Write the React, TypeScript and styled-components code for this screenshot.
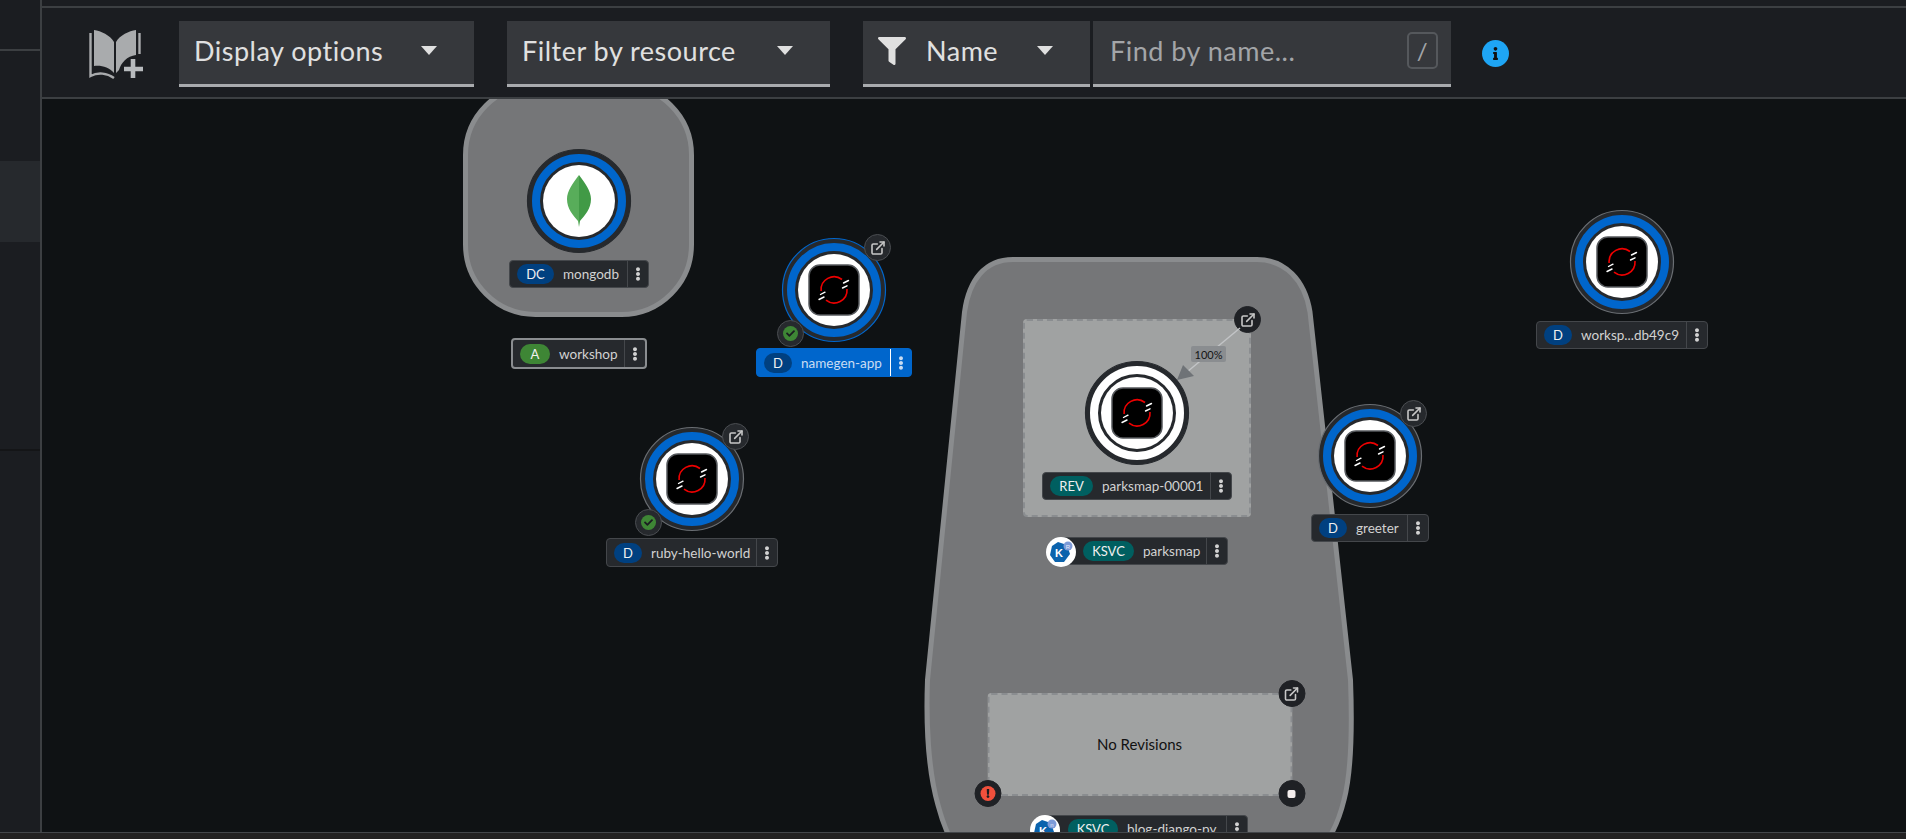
import React from "react";
import styled, { createGlobalStyle } from "styled-components";
import { ExternalLink } from "lucide-react";
import { FaCheck, FaEllipsisV, FaFilter, FaInfo, FaExclamation } from "react-icons/fa";

// canvas origin in page coordinates, everything on the canvas is given in page px
const CX = 42;
const CY = 99;

const GlobalStyle = createGlobalStyle`
    html, body {
        margin: 0;
        padding: 0;
        background-color: #1b1d21;
        overflow: hidden;
    }
    body {
        font-family: "Lato", "Open Sans", sans-serif;
    }
`;

const Page = styled.div`
    display: flex;
    flex-direction: column;
    width: 1906px;
    height: 839px;
    overflow: hidden;
`;

const Shell = styled.div`
    display: flex;
    height: 832px;
`;

const Sidebar = styled.aside`
    display: flex;
    flex-direction: column;
    width: 40px;
    background-color: #1b1d21;
    border-right: 2px solid #3c3f42;
`;

const SideItem = styled.div<{ $h: number; $active?: boolean; $line?: string }>`
    height: ${(p) => p.$h}px;
    background-color: ${(p) => (p.$active ? "#26292d" : "transparent")};
    border-bottom: ${(p) => (p.$line ? `2px solid ${p.$line}` : "none")};
    box-sizing: border-box;
`;

const Main = styled.main`
    display: flex;
    flex-direction: column;
    flex: 1;
    min-width: 0;
`;

const TopStrip = styled.div`
    height: 8px;
    box-sizing: border-box;
    background-color: #1b1d21;
    border-bottom: 2px solid #3c3f42;
`;

const Toolbar = styled.div`
    display: flex;
    align-items: center;
    height: 91px;
    box-sizing: border-box;
    padding: 2px 0 0 47px;
    background-color: #1b1d21;
    border-bottom: 2px solid #3c3f42;
`;

const BookIcon = styled.svg`
    width: 56px;
    height: 50px;
    margin-right: 34px;
    flex: none;
`;

const Dropdown = styled.div<{ $w: number; $mr?: number; $pad?: number }>`
    display: flex;
    align-items: center;
    width: ${(p) => p.$w}px;
    height: 66px;
    margin-right: ${(p) => p.$mr ?? 0}px;
    padding: 0 37px 3px ${(p) => p.$pad ?? 15}px;
    box-sizing: border-box;
    flex: none;
    background-color: #36383c;
    border-bottom: 3px solid #a9abae;
    color: #e0e0e0;
    font-size: 27px;
    letter-spacing: 0.5px;
`;

const Caret = styled.span`
    margin-left: auto;
    width: 0;
    height: 0;
    border-left: 8px solid transparent;
    border-right: 8px solid transparent;
    border-top: 9px solid #e0e0e0;
`;

const FilterIcon = styled(FaFilter)`
    width: 28px;
    height: 28px;
    margin-right: 20px;
    color: #e0e0e0;
`;

const SearchBox = styled(Dropdown)`
    color: #a3a5a8;
    margin-left: 3px;
    padding-right: 13px;
`;

const SlashKey = styled.span`
    margin-left: auto;
    width: 31px;
    height: 37px;
    box-sizing: border-box;
    display: flex;
    align-items: center;
    justify-content: center;
    border: 2px solid #55585c;
    border-radius: 5px;
    color: #a3a5a8;
    font-size: 24px;
`;

const InfoBadge = styled.span`
    display: flex;
    align-items: center;
    justify-content: center;
    width: 27px;
    height: 27px;
    margin-left: 31px;
    border-radius: 50%;
    background-color: #1ea5f5;
    color: #111;
`;

const Canvas = styled.div`
    position: relative;
    flex: 1;
    overflow: hidden;
    background-color: #0f1214;
`;

const Layer = styled.svg`
    position: absolute;
    left: 0;
    top: 0;
`;

// one thing on the topology canvas, x is its horizontal centre, y its top
const CanvasItem = styled.div<{ $x: number; $y: number; $gap?: number }>`
    position: absolute;
    left: ${(p) => p.$x - CX}px;
    top: ${(p) => p.$y - CY}px;
    transform: translateX(-50%);
    display: flex;
    flex-direction: column;
    align-items: center;
    gap: ${(p) => p.$gap ?? 6}px;
`;

const RevisionBox = styled.div<{ $w: number; $h: number }>`
    position: relative;
    width: ${(p) => p.$w}px;
    height: ${(p) => p.$h}px;
    box-sizing: border-box;
    padding-bottom: 2px;
    display: flex;
    align-items: center;
    justify-content: center;
    background-color: #a0a2a2;
    border: 2px dashed #8a8d90;
    border-radius: 4px;
    color: #111;
    font-size: 15px;
`;

const PodWrap = styled.div`
    position: relative;
    width: 106px;
    height: 106px;
`;

const NodeSvg = styled.svg`
    display: block;
    width: 106px;
    height: 106px;
`;

const Decorator = styled.span<{ $solid?: boolean }>`
    position: absolute;
    width: 27px;
    height: 27px;
    box-sizing: border-box;
    display: flex;
    align-items: center;
    justify-content: center;
    border-radius: 50%;
    background-color: ${(p) => (p.$solid ? "#1f2125" : "#26292d")};
    border: 1px solid ${(p) => (p.$solid ? "#1f2125" : "#4a4d51")};
    color: #c7c7c7;
`;

const LinkSpot = styled(Decorator)`
    left: 83px;
    top: -3px;
`;

const StatusSpot = styled(Decorator)`
    left: -4px;
    top: 83px;
`;

const CornerSpot = styled(Decorator)<{ $corner: "tr" | "bl" | "br"; $shift?: number }>`
    ${(p) => (p.$corner === "bl" ? "left: -15px;" : `right: ${-15 + (p.$shift ?? 0)}px;`)}
    ${(p) => (p.$corner === "tr" ? "top: -15px;" : "bottom: -13px;")}
`;

const StatusDot = styled.span<{ $color: string }>`
    display: flex;
    align-items: center;
    justify-content: center;
    width: 15px;
    height: 15px;
    border-radius: 50%;
    background-color: ${(p) => p.$color};
    color: #1b1d21;
`;

const StopDot = styled.span`
    width: 8px;
    height: 8px;
    border-radius: 2px;
    background-color: #f4eeee;
`;

const EdgeTag = styled.span`
    position: absolute;
    left: ${1191 - CX}px;
    top: ${346 - CY}px;
    width: 35px;
    height: 16px;
    display: flex;
    align-items: center;
    justify-content: center;
    border-radius: 2px;
    background-color: #8a8d90;
    color: #151515;
    font-size: 11px;
`;

const Label = styled.div<{ $w: number; $h?: number; $selected?: boolean; $strong?: boolean; $pad?: number }>`
    position: relative;
    width: ${(p) => p.$w}px;
    height: ${(p) => p.$h ?? 28}px;
    box-sizing: border-box;
    display: flex;
    align-items: center;
    padding-left: ${(p) => p.$pad ?? 7}px;
    border-radius: 4px;
    background-color: ${(p) => (p.$selected ? "#0066cc" : "#26292d")};
    border: ${(p) => (p.$strong ? "2px solid #8a8d90" : `1px solid ${p.$selected ? "#0066cc" : "#44474b"}`)};
    color: ${(p) => (p.$selected ? "#c9dcf2" : "#d2d2d2")};
    font-size: 13.5px;
    white-space: nowrap;
`;

const Badge = styled.span<{ $w: number; $color: string }>`
    display: flex;
    align-items: center;
    justify-content: center;
    width: ${(p) => p.$w}px;
    height: 20px;
    flex: none;
    border-radius: 10px;
    background-color: ${(p) => p.$color};
    color: #f0f0f0;
    font-size: 13px;
`;

const LabelName = styled.span`
    flex: 1;
    margin-left: 9px;
`;

const Kebab = styled.span<{ $selected?: boolean }>`
    display: flex;
    align-items: center;
    justify-content: center;
    width: 20px;
    height: 100%;
    flex: none;
    border-left: 1px solid ${(p) => (p.$selected ? "#ffffff" : "#44474b")};
    color: ${(p) => (p.$selected ? "#c9dcf2" : "#d2d2d2")};
`;

const KnativeSvg = styled.svg`
    position: absolute;
    left: -15px;
    top: -1px;
    width: 30px;
    height: 30px;
`;

const Footer = styled.footer`
    flex: 1;
    background-color: #232222;
    border-top: 1px solid #44474b;
`;

const OpenShiftLogo = () => (
    <g>
        <rect x="-25" y="-25" width="50" height="50" rx="11" fill="#000" stroke="#55585c" strokeWidth="1.5" />
        <path d="M8 -10.5 A13 13 0 0 0 -12.9 1" fill="none" stroke="#e00" strokeWidth="1.6" />
        <path d="M-8 10.2 A13 13 0 0 0 13 -1" fill="none" stroke="#e00" strokeWidth="1.6" />
        <g stroke="#fff" strokeWidth="1.4" strokeLinecap="round">
            <path d="M9.5 -7 L14.5 -9.5" />
            <path d="M8.5 -2 L13 -4.2" />
            <path d="M-13.5 4.5 L-9 2.2" />
            <path d="M-15 9.5 L-10 7" />
        </g>
    </g>
);

const MongoLeaf = () => (
    <g>
        <path d="M0 -26 C-6 -18 -12 -10 -12 -2 C-12 8 -6 14 -1 20 L0 26 Z" fill="#58ad5a" />
        <path d="M0 -26 C6 -18 12 -10 12 -2 C12 8 6 14 1 20 L0 26 Z" fill="#419a46" />
    </g>
);

type PodProps = {
    ring?: string;
    rim?: string;
    leaf?: boolean;
    link?: boolean;
    ok?: boolean;
};

// pod donut, drawn as concentric circles
const Pod = ({ ring = "#0066cc", rim = "#6a6e73", leaf, link, ok }: PodProps) => (
    <PodWrap>
        <NodeSvg viewBox="-53 -53 106 106">
            <circle r="51.5" fill="#26292d" stroke={rim} strokeWidth="1.2" />
            <circle r="43" fill="none" stroke={ring} strokeWidth="8" />
            <circle r="36" fill="#fff" />
            {leaf ? <MongoLeaf /> : <OpenShiftLogo />}
        </NodeSvg>
        {link && (
            <LinkSpot>
                <ExternalLink size={16} strokeWidth={2.4} />
            </LinkSpot>
        )}
        {ok && (
            <StatusSpot>
                <StatusDot $color="#3e8635">
                    <FaCheck size={9} />
                </StatusDot>
            </StatusSpot>
        )}
    </PodWrap>
);

const KnativeIcon = ({ letter }: { letter: string }) => (
    <KnativeSvg viewBox="-15 -15 30 30">
        <circle r="15" fill="#fff" />
        <path d="M-3 -10 L6 -7 L9 2 L3 10 L-6 10 L-11 3 L-9 -6 Z" fill="#0b63ad" />
        <text x="-2" y="5" textAnchor="middle" fontSize="11" fontWeight="700" fill="#fff" fontFamily="Liberation Sans, sans-serif">K</text>
        <circle cx="7" cy="-6" r="4.5" fill="#7d9bd8" />
        <text x="7" y="-3.5" textAnchor="middle" fontSize="6" fill="#e6ecf8" fontFamily="Liberation Sans, sans-serif">{letter}</text>
    </KnativeSvg>
);

type TagProps = {
    w: number;
    kind: string;
    kindW: number;
    color: string;
    name: string;
    selected?: boolean;
    strong?: boolean;
    pad?: number;
    h?: number;
    service?: string;
};

const NodeLabel = ({ w, kind, kindW, color, name, selected, strong, pad, h, service }: TagProps) => (
    <Label $w={w} $h={h} $selected={selected} $strong={strong} $pad={pad}>
        {service && <KnativeIcon letter={service} />}
        <Badge $w={kindW} $color={color}>{kind}</Badge>
        <LabelName>{name}</LabelName>
        <Kebab $selected={selected}>
            <FaEllipsisV size={14} />
        </Kebab>
    </Label>
);

const BLUE = "#004080";
const TEAL = "#005f60";

export default function App() {
    return (
        <Page>
            <GlobalStyle />
            <Shell>
                <Sidebar>
                    <SideItem $h={51} $line="#3c3f42" />
                    <SideItem $h={110} />
                    <SideItem $h={81} $active />
                    <SideItem $h={209} $line="#141517" />
                </Sidebar>
                <Main>
                    <TopStrip />
                    <Toolbar>
                        <BookIcon viewBox="0 0 56 50">
                            <g fill="#a9abad">
                                <path d="M5 1 C12 2 21 6 25 13 V44 C20 38 12 36 5 37 Z" />
                                <path d="M27 13 C31 6 40 2 47 1 V26 C38 27 32 34 30 41 L27 44 Z" />
                            </g>
                            <path d="M1.5 4 V47 C9 43 18 44 25 49" fill="none" stroke="#a9abad" strokeWidth="2.4" />
                            <path d="M50.5 4 V25" fill="none" stroke="#a9abad" strokeWidth="2.4" />
                            <path d="M44 30 V49 M35 40 H54" fill="none" stroke="#b8bbbe" strokeWidth="4.6" />
                        </BookIcon>
                        <Dropdown $w={295} $mr={33}>
                            Display options
                            <Caret />
                        </Dropdown>
                        <Dropdown $w={323} $mr={33}>
                            Filter by resource
                            <Caret />
                        </Dropdown>
                        <Dropdown $w={227}>
                            <FilterIcon />
                            Name
                            <Caret />
                        </Dropdown>
                        <SearchBox $w={358} $pad={17}>
                            Find by name...
                            <SlashKey>/</SlashKey>
                        </SearchBox>
                        <InfoBadge>
                            <FaInfo size={13} />
                        </InfoBadge>
                    </Toolbar>
                    <Canvas>
                        {/* group hulls */}
                        <Layer width={1864} height={733} viewBox={`${CX} ${CY} 1864 733`}>
                            <rect x="465.5" y="85" width="226" height="229.5" rx="70" fill="#757678" stroke="#8a8c8e" strokeWidth="5" />
                            <path
                                d="M1013 259.5 H1257 C1285 259.5 1305 280 1310 312 L1350.5 680 C1352 720 1352 770 1344 800 C1332 850 1300 880 1257 880 H1013 C970 880 950 850 938 805 C928 770 926 720 927.5 680 L964.5 312 C969 280 985 259.5 1013 259.5 Z"
                                fill="#757678"
                                stroke="#8a8c8e"
                                strokeWidth="5"
                            />
                        </Layer>

                        <CanvasItem $x={1137} $y={319}>
                            <RevisionBox $w={228} $h={198}>
                                <CornerSpot $corner="tr" $shift={3} $solid>
                                    <ExternalLink size={16} strokeWidth={2.4} />
                                </CornerSpot>
                            </RevisionBox>
                        </CanvasItem>
                        <CanvasItem $x={1139.5} $y={693}>
                            <RevisionBox $w={305} $h={103}>
                                No Revisions
                                <CornerSpot $corner="tr" $solid>
                                    <ExternalLink size={16} strokeWidth={2.4} />
                                </CornerSpot>
                                <CornerSpot $corner="bl" $solid>
                                    <StatusDot $color="#f0503c">
                                        <FaExclamation size={9} />
                                    </StatusDot>
                                </CornerSpot>
                                <CornerSpot $corner="br" $solid>
                                    <StopDot />
                                </CornerSpot>
                            </RevisionBox>
                        </CanvasItem>

                        <Layer width={1864} height={733} viewBox={`${CX} ${CY} 1864 733`}>
                            <line x1="1240" y1="328" x2="1187" y2="372" stroke="#c2c4c6" strokeWidth="1.5" />
                            <polygon points="1177,380 1183,365 1194,376" fill="#6f7377" />
                        </Layer>
                        <EdgeTag>100%</EdgeTag>

                        <CanvasItem $x={579} $y={148}>
                            <Pod leaf rim="#26292d" />
                            <NodeLabel w={140} kind="DC" kindW={37} color={BLUE} name="mongodb" />
                        </CanvasItem>
                        <CanvasItem $x={579} $y={338}>
                            <NodeLabel w={136} h={31} strong kind="A" kindW={30} color="#3e8635" name="workshop" />
                        </CanvasItem>

                        <CanvasItem $x={834} $y={237} $gap={5}>
                            <Pod rim="#0066cc" link ok />
                            <NodeLabel w={156} h={29} selected kind="D" kindW={28} color={BLUE} name="namegen-app" />
                        </CanvasItem>

                        <CanvasItem $x={692} $y={426}>
                            <Pod link ok />
                            <NodeLabel w={172} h={29} kind="D" kindW={28} color={BLUE} name="ruby-hello-world" />
                        </CanvasItem>

                        <CanvasItem $x={1137} $y={360}>
                            <Pod ring="#fff" rim="#26292d" />
                            <NodeLabel w={190} kind="REV" kindW={43} color={TEAL} name="parksmap-00001" />
                        </CanvasItem>

                        <CanvasItem $x={1144} $y={537}>
                            <NodeLabel w={168} pad={22} kind="KSVC" kindW={51} color={TEAL} name="parksmap" service="R" />
                        </CanvasItem>

                        <CanvasItem $x={1146} $y={815}>
                            <NodeLabel w={204} pad={23} kind="KSVC" kindW={50} color={TEAL} name="blog-django-py" service="n" />
                        </CanvasItem>

                        <CanvasItem $x={1370} $y={403} $gap={5}>
                            <Pod link />
                            <NodeLabel w={118} kind="D" kindW={28} color={BLUE} name="greeter" />
                        </CanvasItem>

                        <CanvasItem $x={1622} $y={209}>
                            <Pod />
                            <NodeLabel w={172} kind="D" kindW={28} color={BLUE} name="worksp...db49c9" />
                        </CanvasItem>
                    </Canvas>
                </Main>
            </Shell>
            <Footer />
        </Page>
    );
}
